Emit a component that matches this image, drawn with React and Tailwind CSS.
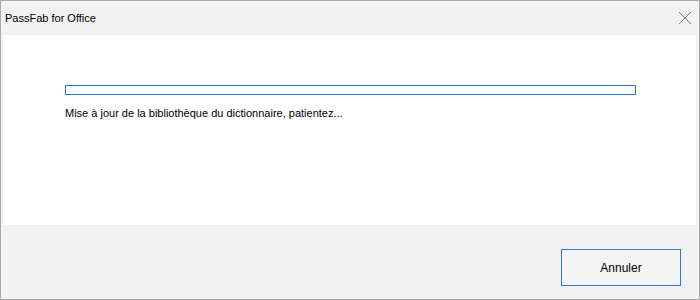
import React from 'react';

function App() {
    return (
        <div className="w-[700px] h-[300px] border border-[#a9a9a9] bg-[#f2f2f2] flex flex-col font-['Liberation_Sans',Arial,sans-serif] text-[11px] text-[#000]">
            <div className="h-[34px] flex items-center justify-between pl-[4px] pr-[6px]">
                <span>PassFab for Office</span>
                <svg width="14" height="14" viewBox="0 0 14 14" className="mr-[1px]">
                    <path d="M1 1 L13 13 M13 1 L1 13" stroke="#7a7a7a" strokeWidth="1" fill="none" />
                </svg>
            </div>
            <div className="h-[190px] mx-[2px] mr-[3px] bg-white pt-[50px] px-[62px]">
                <div className="h-[10px] w-[571px] border border-[#2d78c8]" />
                <p className="mt-[10px] leading-[16px]">Mise à jour de la bibliothèque du dictionnaire, patientez...</p>
            </div>
            <div className="flex-1 flex justify-end items-start pt-[24px] pr-[18px]">
                <button className="w-[120px] h-[37px] border border-[#2a78d0] bg-[#f4f4f4] text-[12px]">Annuler</button>
            </div>
        </div>
    );
}

export default App;
